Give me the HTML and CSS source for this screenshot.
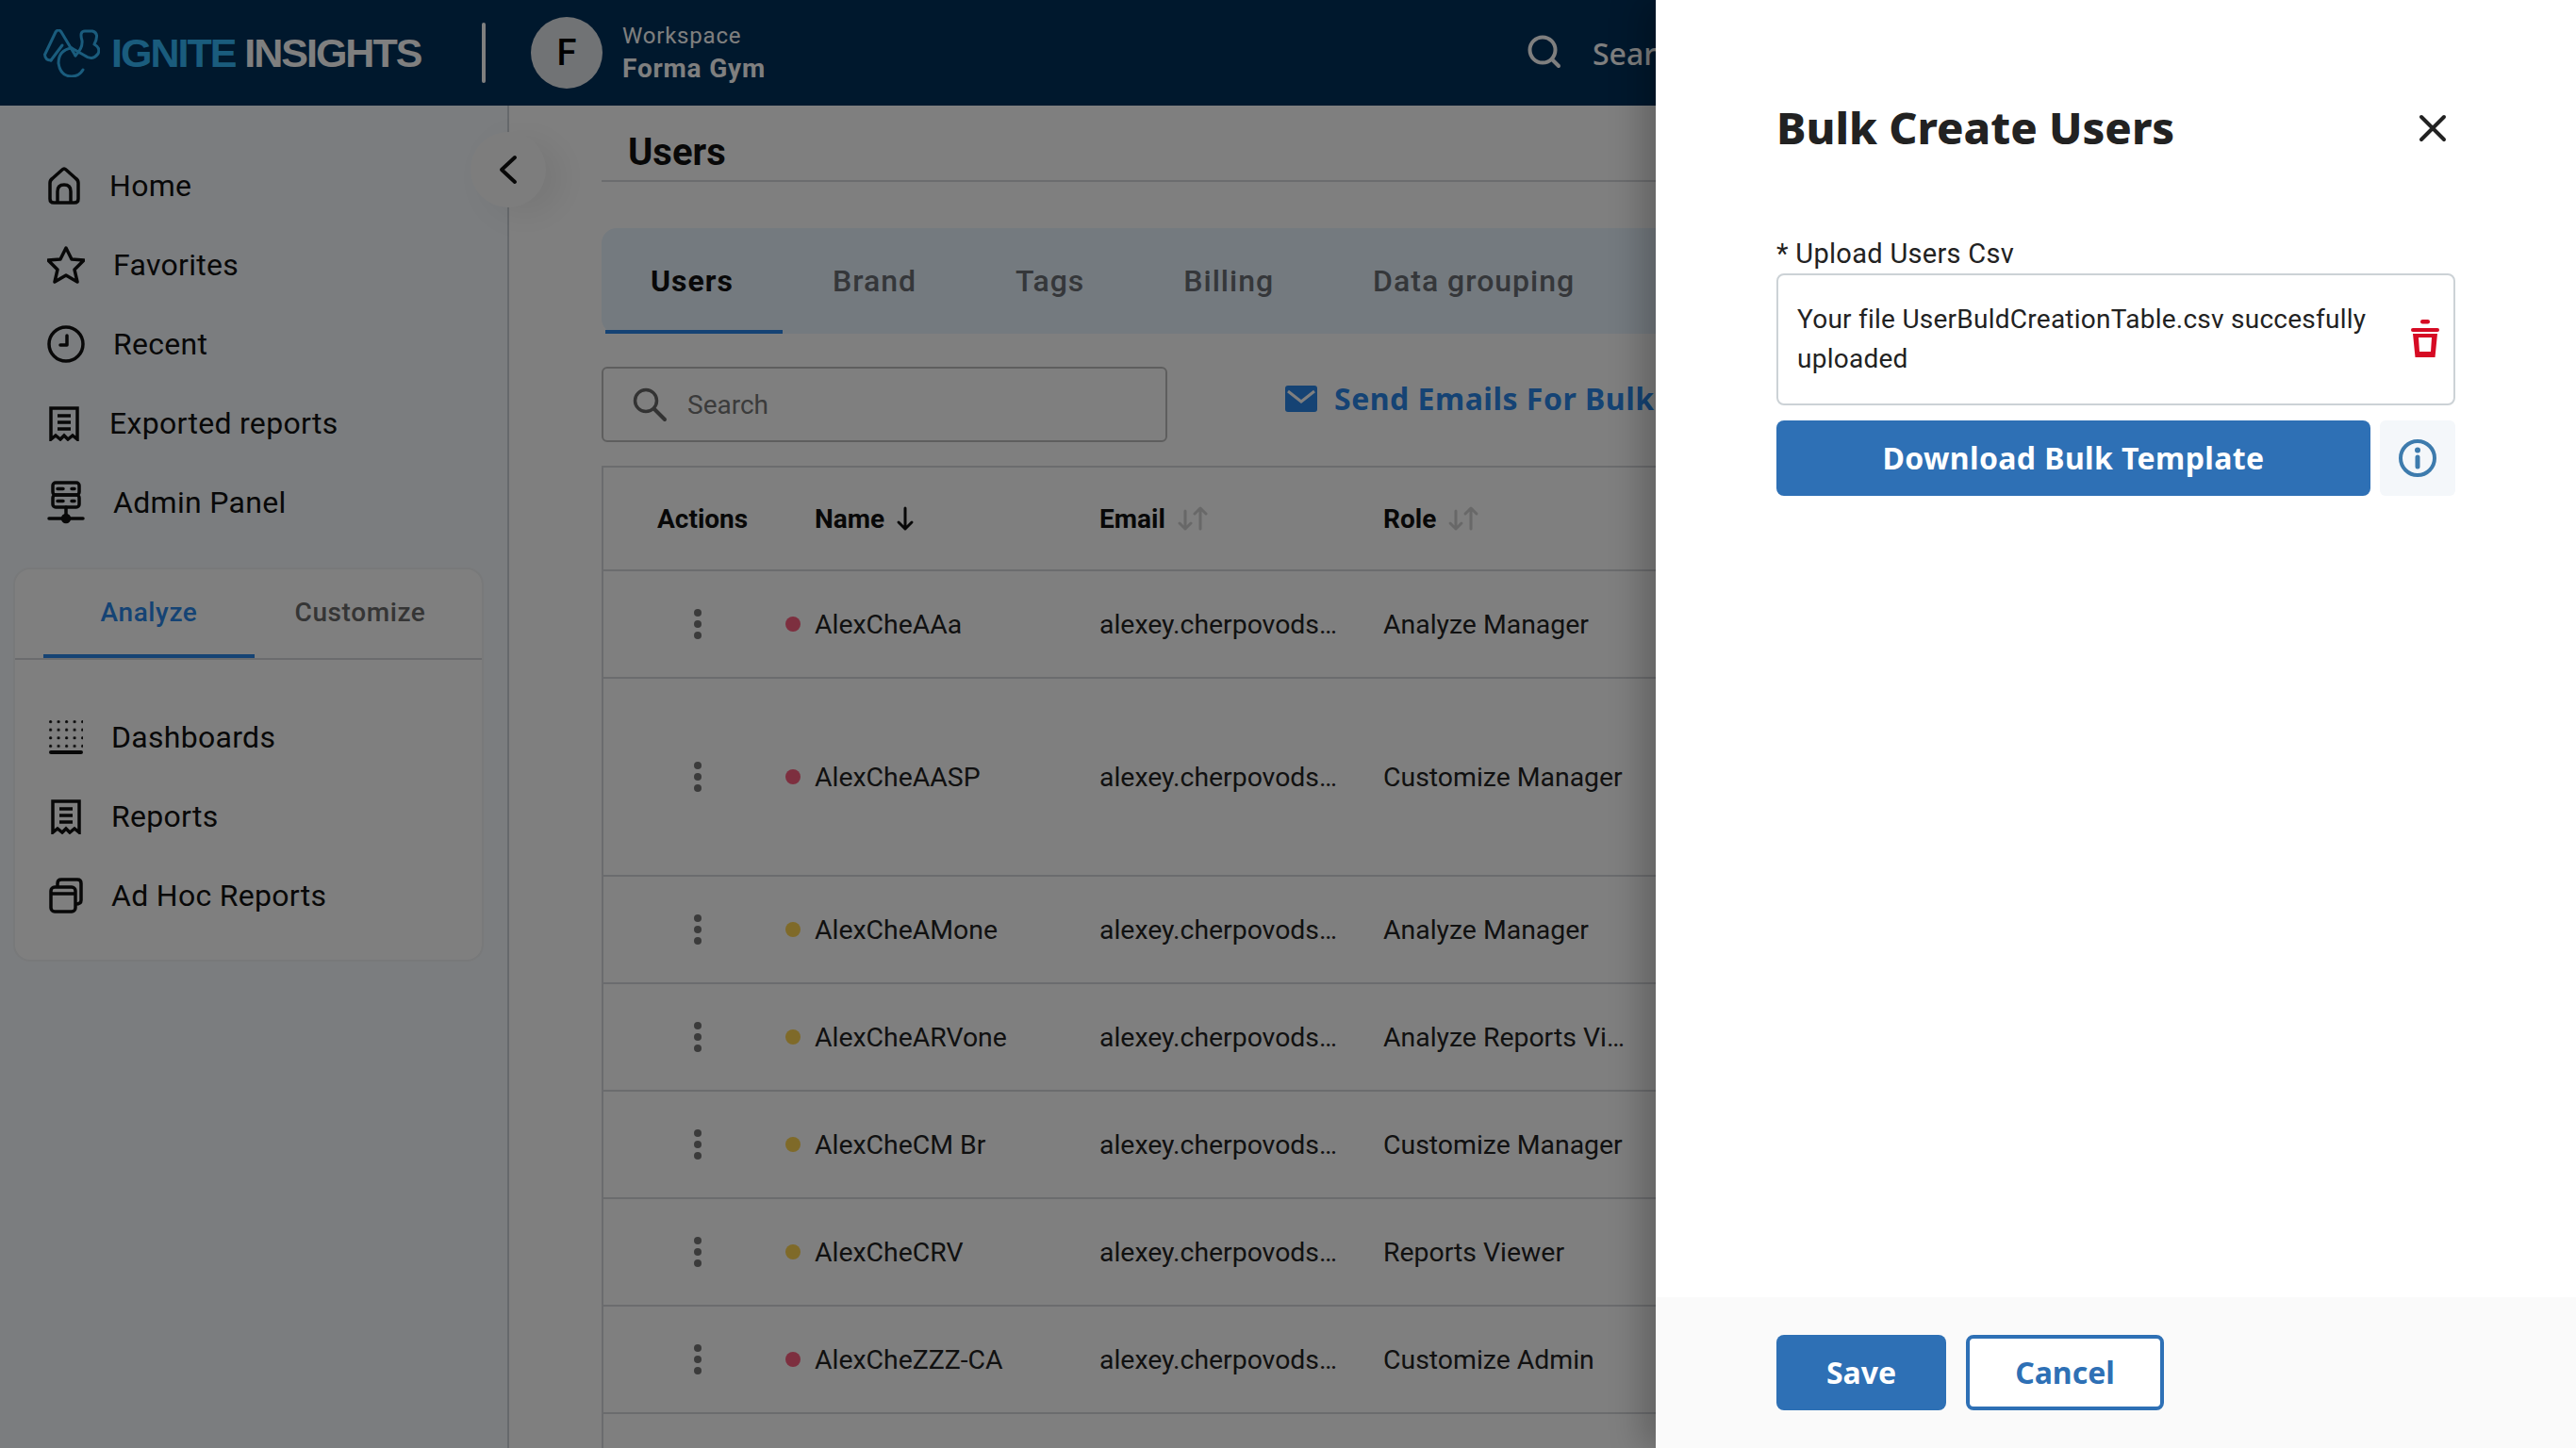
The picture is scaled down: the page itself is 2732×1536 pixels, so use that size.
FILE: index.html
```html
<!DOCTYPE html>
<html lang="en">
  <head>
    <meta charset="UTF-8" />
    <title>Users</title>
    <link rel="stylesheet" href="styles.css">
  </head>
  <body>
    <div class="app">
      <header class="top-bar">
        <div class="logo">
          <svg class="logo-mark" viewBox="0 0 60 51" fill="none" stroke="currentColor" stroke-width="3" stroke-linecap="round" stroke-linejoin="round">
            <path d="M8 33 Q2 33 1.5 27 L13 3 Q16 -1 19 3 L34 28" />
            <path d="M8 33 L20 17" />
            <path d="M34 28 Q42 20 41 12 Q38 2 44 2 H52 Q60 4 54 16 Q61 20 58 26 Q52 34 44 28 L30 20" />
            <path d="M30 20 Q16 22 16 36 Q18 50 30 50 Q38 50 42 43" />
          </svg>
          <span class="logo-text"><span class="logo-teal">IGNITE</span> INSIGHTS</span>
        </div>
        <div class="top-divider"></div>
        <div class="avatar">F</div>
        <div class="workspace">
          <span class="workspace-label">Workspace</span>
          <span class="workspace-name">Forma Gym</span>
        </div>
        <div class="top-search">
          <svg width="38" height="38" viewBox="0 0 38 38" fill="none" stroke="currentColor" stroke-width="4" stroke-linecap="round">
            <circle cx="17" cy="16" r="13.5" />
            <path d="M27 26 L34 33" />
          </svg>
          <span>Search</span>
        </div>
      </header>

      <div class="page">
        <aside class="sidebar">
          <button class="collapse">
            <svg width="22" height="32" viewBox="0 0 22 32" fill="none" stroke="currentColor" stroke-width="4" stroke-linecap="round" stroke-linejoin="round"><path d="M18 3 L4 16 L18 29" /></svg>
          </button>
          <nav class="nav">
            <a class="nav-item">
              <svg width="36" height="40" viewBox="0 0 36 40" fill="none" stroke="currentColor" stroke-width="3.5" stroke-linejoin="round">
                <path d="M3 17 Q3 14 6 12 L16 3 Q18 1 20 3 L30 12 Q33 14 33 17 V34 Q33 38 29 38 H7 Q3 38 3 34 Z" />
                <path d="M11 38 V26 Q11 19 18 19 Q25 19 25 26 V38" />
              </svg>
              Home
            </a>
            <a class="nav-item">
              <svg width="40" height="40" viewBox="0 0 40 40" fill="none" stroke="currentColor" stroke-width="3.5" stroke-linejoin="round"><path d="M20 2 L26 14 L39 15 L29 25 L32 38 L20 31 L8 38 L11 25 L1 15 L14 14 Z" /></svg>
              Favorites
            </a>
            <a class="nav-item">
              <svg width="40" height="40" viewBox="0 0 40 40" fill="none" stroke="currentColor" stroke-width="3.5" stroke-linecap="round" stroke-linejoin="round">
                <circle cx="20" cy="20" r="18" />
                <path d="M21 11 V21 H14" />
              </svg>
              Recent
            </a>
            <a class="nav-item">
              <svg class="icon-receipt" width="36" height="38" viewBox="0 0 36 38" fill="none" stroke="currentColor" stroke-width="3.5">
                <path d="M4 36 V3 H32 V36 L27 32 L22 36 L18 32 L14 36 L9 32 Z" />
                <path d="M11 11 H25 M11 18 H25 M11 25 H25" />
              </svg>
              Exported reports
            </a>
            <a class="nav-item">
              <svg width="40" height="46" viewBox="0 0 40 46" fill="none" stroke="currentColor" stroke-width="3.5" stroke-linecap="round">
                <rect x="6" y="2" width="28" height="13" rx="3" />
                <rect x="6" y="15" width="28" height="13" rx="3" />
                <path d="M11 8.5 H17 M11 21.5 H17 M26 8.5 H29 M26 21.5 H29" />
                <path d="M20 28 V36 M2 40 H38" />
                <circle cx="20" cy="40" r="3.5" fill="currentColor" />
              </svg>
              Admin Panel
            </a>
          </nav>

          <section class="side-card">
            <div class="side-tabs">
              <span class="side-tab side-tab-active">Analyze</span>
              <span class="side-tab">Customize</span>
            </div>
            <div class="side-list">
              <a class="nav-item">
                <svg width="36" height="36" viewBox="0 0 36 36" fill="currentColor">
                  <defs>
                    <pattern id="dots" width="8.5" height="8.6" patternUnits="userSpaceOnUse"><circle cx="1.6" cy="1.6" r="1.6" /></pattern>
                  </defs>
                  <rect width="36" height="30" fill="url(#dots)" />
                  <rect y="32" width="36" height="4" rx="2" />
                </svg>
                Dashboards
              </a>
              <a class="nav-item">
                <svg class="icon-receipt" width="36" height="38" viewBox="0 0 36 38" fill="none" stroke="currentColor" stroke-width="3.5">
                  <path d="M4 36 V3 H32 V36 L27 32 L22 36 L18 32 L14 36 L9 32 Z" />
                  <path d="M11 11 H25 M11 18 H25 M11 25 H25" />
                </svg>
                Reports
              </a>
              <a class="nav-item">
                <svg width="36" height="38" viewBox="0 0 36 38" fill="none" stroke="currentColor" stroke-width="3.5" stroke-linejoin="round">
                  <rect x="2" y="10" width="26" height="26" rx="4" />
                  <path d="M2 17 H28 M9 10 V6 Q9 2 13 2 H30 Q34 2 34 6 V24 Q34 28 28 28" />
                </svg>
                Ad Hoc Reports
              </a>
            </div>
          </section>
        </aside>

        <main class="main">
          <h1 class="page-title">Users</h1>

          <div class="tabs">
            <span class="tab tab-active">Users</span>
            <span class="tab">Brand</span>
            <span class="tab">Tags</span>
            <span class="tab">Billing</span>
            <span class="tab">Data grouping</span>
          </div>

          <div class="tools">
            <div class="search-box">
              <svg width="38" height="38" viewBox="0 0 38 38" fill="none" stroke="currentColor" stroke-width="3.5" stroke-linecap="round">
                <circle cx="15" cy="15" r="11.5" />
                <path d="M24 24 L35 35" stroke-width="4" />
              </svg>
              <span>Search</span>
            </div>
            <div class="send-link">
              <svg width="34" height="28" viewBox="0 0 34 28"><rect width="34" height="28" rx="3" fill="currentColor" /><path d="M3 6 L17 17 L31 6" fill="none" stroke="#fff" stroke-width="3" /></svg>
              <span>Send Emails For Bulk Users</span>
            </div>
          </div>

          <div class="table">
            <div class="thead">
              <span class="th-actions">Actions</span>
              <span class="th">Name
                <svg width="20" height="28" viewBox="0 0 20 28" fill="none" stroke="currentColor" stroke-width="3" stroke-linecap="round" stroke-linejoin="round"><path d="M10 3 V25 M3 18 L10 25 L17 18" /></svg>
              </span>
              <span class="th">Email
                <svg class="sort-off" width="34" height="28" viewBox="0 0 34 28" fill="none" stroke="currentColor" stroke-width="3" stroke-linecap="round" stroke-linejoin="round"><path d="M9 6 V25 M3 19 L9 25 L15 19 M25 25 V3 M19 9 L25 3 L31 9" /></svg>
              </span>
              <span class="th">Role
                <svg class="sort-off" width="34" height="28" viewBox="0 0 34 28" fill="none" stroke="currentColor" stroke-width="3" stroke-linecap="round" stroke-linejoin="round"><path d="M9 6 V25 M3 19 L9 25 L15 19 M25 25 V3 M19 9 L25 3 L31 9" /></svg>
              </span>
            </div>

            <div class="row">
              <span class="kebab"><i></i><i></i><i></i></span>
              <span class="status status-red"></span>
              <span>AlexCheAAa</span>
              <span>alexey.cherpovods…</span>
              <span>Analyze Manager</span>
            </div>
            <div class="row row-tall">
              <span class="kebab"><i></i><i></i><i></i></span>
              <span class="status status-red"></span>
              <span>AlexCheAASP</span>
              <span>alexey.cherpovods…</span>
              <span>Customize Manager</span>
            </div>
            <div class="row">
              <span class="kebab"><i></i><i></i><i></i></span>
              <span class="status status-amber"></span>
              <span>AlexCheAMone</span>
              <span>alexey.cherpovods…</span>
              <span>Analyze Manager</span>
            </div>
            <div class="row">
              <span class="kebab"><i></i><i></i><i></i></span>
              <span class="status status-amber"></span>
              <span>AlexCheARVone</span>
              <span>alexey.cherpovods…</span>
              <span>Analyze Reports Vi…</span>
            </div>
            <div class="row">
              <span class="kebab"><i></i><i></i><i></i></span>
              <span class="status status-amber"></span>
              <span>AlexCheCM Br</span>
              <span>alexey.cherpovods…</span>
              <span>Customize Manager</span>
            </div>
            <div class="row">
              <span class="kebab"><i></i><i></i><i></i></span>
              <span class="status status-amber"></span>
              <span>AlexCheCRV</span>
              <span>alexey.cherpovods…</span>
              <span>Reports Viewer</span>
            </div>
            <div class="row">
              <span class="kebab"><i></i><i></i><i></i></span>
              <span class="status status-red"></span>
              <span>AlexCheZZZ-CA</span>
              <span>alexey.cherpovods…</span>
              <span>Customize Admin</span>
            </div>
            <div class="row"></div>
          </div>
        </main>
      </div>
    </div>

    <div class="backdrop"></div>

    <aside class="drawer">
      <div class="drawer-body">
        <div class="drawer-head">
          <h2>Bulk Create Users</h2>
          <svg width="30" height="30" viewBox="0 0 30 30" fill="none" stroke="currentColor" stroke-width="4" stroke-linecap="round"><path d="M3 3 L27 27 M27 3 L3 27" /></svg>
        </div>
        <label class="field-label">* Upload Users Csv</label>
        <div class="upload-box">
          <p>Your file UserBuldCreationTable.csv succesfully uploaded</p>
          <svg width="30" height="40" viewBox="0 0 30 40" fill="#d60b24">
            <rect x="10" y="0" width="10" height="4.5" rx="2.2" />
            <rect x="0" y="9" width="30" height="4" rx="2" />
            <path d="M2 15 H28 L25.5 40 H4.5 Z M8 19 L9 34 H21 L22 19 Z" fill-rule="evenodd" />
          </svg>
        </div>
        <div class="template-row">
          <button class="btn-primary btn-template">Download Bulk Template</button>
          <div class="info-tile">
            <svg width="40" height="40" viewBox="0 0 40 40" fill="none" stroke="#3d7bad" stroke-width="4">
              <circle cx="20" cy="20" r="18" />
              <path d="M20 19 V29" stroke-width="5" stroke-linecap="round" />
              <circle cx="20" cy="11.5" r="3" fill="#3d7bad" stroke="none" />
            </svg>
          </div>
        </div>
      </div>
      <div class="drawer-foot">
        <button class="btn-primary btn-save">Save</button>
        <button class="btn-outline">Cancel</button>
      </div>
    </aside>
  </body>
</html>
```

FILE: styles.css
```css
/* Basic styling */
* {
  box-sizing: border-box;
}

body {
  margin: 0;
  width: 2732px;
  height: 1536px;
  overflow: hidden;
  position: relative;
  font-family: Roboto, sans-serif;
  background-color: #ffffff;
  color: #111;
}

.app {
  height: 100%;
  display: flex;
  flex-direction: column;
}

/* Top bar */
.top-bar {
  height: 112px;
  flex-shrink: 0;
  display: flex;
  align-items: center;
  padding-left: 46px;
  background-color: #00305a;
  color: #fff;
}

.logo {
  display: flex;
  align-items: center;
  gap: 12px;
  width: 465px;
}

.logo-mark {
  width: 60px;
  height: 51px;
  flex-shrink: 0;
  color: #34b8fa;
}

.logo-text {
  font-family: "Liberation Sans", sans-serif;
  font-weight: 700;
  font-size: 43px;
  letter-spacing: -2px;
  white-space: nowrap;
}

.logo-teal {
  color: #34b8fa;
}

.top-divider {
  width: 4px;
  height: 64px;
  background-color: #fff;
  border-radius: 2px;
}

.avatar {
  width: 76px;
  height: 76px;
  margin-left: 48px;
  border-radius: 50%;
  background-color: #e2e6ea;
  color: #000;
  font-size: 38px;
  font-weight: 500;
  display: flex;
  align-items: center;
  justify-content: center;
}

.workspace {
  display: flex;
  flex-direction: column;
  gap: 4px;
  margin-left: 21px;
  font-family: Roboto, sans-serif;
}

.workspace-label {
  font-size: 24px;
  letter-spacing: 0.8px;
}

.workspace-name {
  font-size: 28px;
  font-weight: 700;
  letter-spacing: 0.8px;
}

.top-search {
  margin-left: auto;
  display: flex;
  align-items: center;
  gap: 32px;
  font-family: "Noto Sans", sans-serif;
  font-size: 32px;
  font-weight: 500;
  width: 1113px;
}

/* Sidebar */
.page {
  flex: 1;
  display: flex;
  min-height: 0;
}

.sidebar {
  width: 540px;
  flex-shrink: 0;
  position: relative;
  padding-top: 43px;
  background-color: #f6fafe;
  border-right: 2px solid #ccd2d8;
}

.collapse {
  position: absolute;
  top: 28px;
  right: -41px;
  width: 80px;
  height: 80px;
  padding: 0;
  border: none;
  border-radius: 50%;
  background-color: #fbfbfb;
  color: #111;
  box-shadow: 18px 8px 36px rgba(0, 0, 0, 0.07);
  display: flex;
  align-items: center;
  justify-content: center;
}

.nav {
  padding-left: 50px;
}

.nav-item {
  height: 84px;
  display: flex;
  align-items: center;
  gap: 30px;
  font-size: 32px;
  letter-spacing: 0.3px;
  color: #111;
}

.icon-receipt {
  width: 36px;
}

.side-card {
  width: 499px;
  height: 418px;
  margin: 27px 0 0 14px;
  background-color: #fff;
  border: 2px solid #f0f2f4;
  border-radius: 18px;
}

.side-tabs {
  height: 96px;
  padding-left: 30px;
  display: flex;
  border-bottom: 2px solid #d6d9dc;
}

.side-tab {
  width: 224px;
  padding-top: 29px;
  text-align: center;
  font-size: 28px;
  font-weight: 500;
  letter-spacing: 0.6px;
  color: #6a6a6a;
}

.side-tab-active {
  color: #2a86e8;
  border-bottom: 4px solid #2a86e8;
}

.side-list {
  padding: 40px 0 0 36px;
}

/* Main area */
.main {
  flex: 1;
  min-width: 0;
  padding-left: 98px;
  overflow: hidden;
  background-color: #fff;
}

.page-title {
  height: 81px;
  margin: 0;
  padding: 29px 0 0 28px;
  font-size: 40px;
  line-height: 42px;
  font-weight: 700;
  border-bottom: 2px solid #d6d9dc;
}

.tabs {
  height: 112px;
  margin-top: 49px;
  display: flex;
  padding-left: 4px;
  background-color: #e8f4ff;
  border-radius: 16px 0 0 16px;
}

.tab {
  height: 112px;
  padding: 37px 52.5px 0;
  font-size: 32px;
  font-weight: 500;
  letter-spacing: 1px;
  color: #6a6f74;
}

.tab-active {
  padding-left: 48px;
  color: #111;
  font-weight: 700;
  border-bottom: 4px solid #2a86e8;
}

.tools {
  height: 140px;
  padding-top: 35px;
  display: flex;
  align-items: flex-start;
  gap: 125px;
}

.search-box {
  width: 600px;
  height: 80px;
  flex-shrink: 0;
  padding-left: 30px;
  display: flex;
  align-items: center;
  gap: 21px;
  border: 2px solid #bdbdbd;
  border-radius: 6px;
  font-size: 28px;
  color: #777;
}

.search-box svg {
  color: #666;
}

.send-link {
  margin-top: 12px;
  display: flex;
  align-items: center;
  gap: 18px;
  font-family: "Noto Sans", sans-serif;
  font-size: 32px;
  font-weight: 700;
  letter-spacing: 0.5px;
  white-space: nowrap;
  color: #2a86e8;
}

/* Table */
.table {
  border: 2px solid #d6d9dc;
  border-right: none;
  font-size: 28.4px;
  color: #222;
  width: 1400px;
}

.thead {
  height: 108px;
  display: grid;
  grid-template-columns: 224px 302px 301px 1fr;
  align-items: center;
  font-weight: 700;
  font-size: 28px;
  color: #111;
}

.th-actions {
  padding-left: 57px;
}

.th {
  display: flex;
  align-items: center;
  gap: 12px;
}

.sort-off {
  color: #d0d0d0;
}

.row {
  height: 114px;
  display: grid;
  grid-template-columns: 192px 32px 302px 301px 1fr;
  align-items: center;
  white-space: nowrap;
  border-top: 2px solid #d6d9dc;
}

.row-tall {
  height: 210px;
}

.kebab {
  display: flex;
  flex-direction: column;
  align-items: center;
  gap: 4px;
  padding-left: 2px;
  width: 198px;
}

.kebab i {
  width: 8px;
  height: 8px;
  border-radius: 50%;
  background-color: #777;
}

.status {
  width: 16px;
  height: 16px;
  margin-left: 1px;
  border-radius: 50%;
}

.status-red {
  background-color: #fb5f7f;
}

.status-amber {
  background-color: #ffd452;
}

/* Dim layer and drawer */
.backdrop {
  position: absolute;
  inset: 0;
  background-color: rgba(0, 0, 0, 0.5);
}

.drawer {
  position: absolute;
  top: 0;
  right: 0;
  bottom: 0;
  width: 976px;
  display: flex;
  flex-direction: column;
  background-color: #fff;
  font-family: Roboto, sans-serif;
  box-shadow: -16px 0 32px rgba(0, 0, 0, 0.22);
}

.drawer-body {
  flex: 1;
  padding: 0 128px 0 128px;
}

.drawer-head {
  height: 179px;
  padding-top: 92px;
  display: flex;
  align-items: center;
  justify-content: space-between;
  color: #222;
}

.drawer-head h2 {
  margin: 0;
  font-family: "Noto Sans", sans-serif;
  font-size: 47px;
  font-weight: 800;
  line-height: 1;
}

.drawer-head svg {
  margin-right: 9px;
}

.field-label {
  display: block;
  margin-top: 71px;
  font-size: 29px;
  line-height: 38px;
  letter-spacing: 0.3px;
  color: #222;
}

.upload-box {
  height: 140px;
  margin-top: 2px;
  padding: 0 15px 0 20px;
  display: flex;
  align-items: center;
  gap: 20px;
  border: 2px solid #ccd2d6;
  border-radius: 8px;
}

.upload-box p {
  margin: 0;
  flex: 1;
  font-size: 28px;
  line-height: 42px;
  letter-spacing: 0.25px;
  color: #222;
}

.upload-box svg {
  flex-shrink: 0;
  margin-top: -2px;
}

.template-row {
  display: flex;
  gap: 10px;
  margin-top: 16px;
}

.btn-primary {
  height: 80px;
  padding: 0 0 2px;
  border: none;
  border-radius: 8px;
  background-color: #2e70b5;
  color: #fff;
  font-family: "Noto Sans", sans-serif;
  font-weight: 700;
  font-size: 32px;
}

.btn-template {
  width: 630px;
  letter-spacing: 0.4px;
}

.info-tile {
  flex: 1;
  height: 80px;
  border-radius: 6px;
  background-color: #f4f7fa;
  display: flex;
  align-items: center;
  justify-content: center;
}

.drawer-foot {
  height: 160px;
  padding: 40px 0 0 128px;
  display: flex;
  align-items: flex-start;
  gap: 21px;
  background-color: #fafafa;
}

.btn-save {
  width: 180px;
  height: 80px;
}

.btn-outline {
  width: 210px;
  height: 80px;
  padding: 0 0 2px;
  border: 4px solid #2e70b5;
  border-radius: 8px;
  background-color: #fff;
  color: #2e70b5;
  font-family: "Noto Sans", sans-serif;
  font-weight: 700;
  font-size: 32px;
}
```
